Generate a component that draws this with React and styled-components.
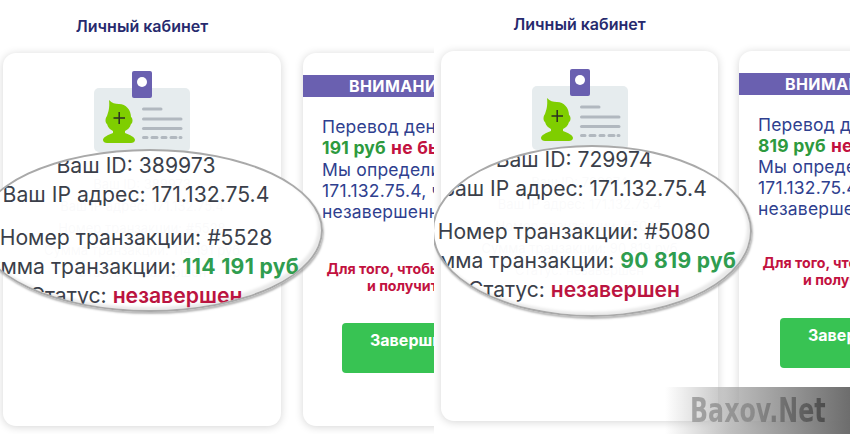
import React from "react";
import styled, { createGlobalStyle } from "styled-components";

const Global = createGlobalStyle`
  html, body { margin: 0; padding: 0; background: #fff; }
  body { font-family: Inter, "Liberation Sans", sans-serif; }
`;

const Page = styled.div`
  position: relative;
  display: flex;
  width: 850px;
  height: 434px;
  overflow: hidden;
  background: #fff;
`;

const Shot = styled.section`
  position: relative;
  flex: none;
  width: ${(p) => p.$width}px;
  height: 434px;
  overflow: hidden;
  background: #fff;
  padding-left: ${(p) => p.$left}px;
  padding-top: ${(p) => p.$top}px;
  box-sizing: border-box;
`;

const Title = styled.h2`
  width: ${(p) => p.$width}px;
  margin: 0 0 ${(p) => p.$gap}px;
  font-size: 16px;
  line-height: 18px;
  font-weight: 600;
  text-align: center;
  color: #272a6e;
`;

const Cards = styled.div`
  display: flex;
  gap: ${(p) => p.$gap}px;
`;

const Card = styled.div`
  flex: none;
  width: ${(p) => p.$width}px;
  height: ${(p) => p.$height}px;
  background: #fff;
  border-radius: 13px;
  box-shadow: 0 1px 9px rgba(0, 0, 0, 0.17);
`;

const IdCard = styled(Card)`
  display: flex;
  flex-direction: column;
  align-items: center;
  padding-top: 18px;
  box-sizing: border-box;
`;

const BadgeIcon = styled.svg`
  display: block;
  flex: none;
  width: 96px;
  height: 84px;
`;

const Ghost = styled.div`
  display: flex;
  flex-direction: column;
  align-items: center;
  gap: 5px;
  margin-top: 21px;
  font-size: 13px;
  line-height: 17px;
  color: #30344d;
`;

const Notice = styled(Card)`
  padding-top: 22px;
  box-sizing: border-box;
  overflow: hidden;
`;

const Banner = styled.div`
  height: 22px;
  padding-left: 46px;
  background: #6a60b0;
  color: #fff;
  font-size: 16px;
  line-height: 22px;
  font-weight: 700;
  letter-spacing: 0.4px;
  white-space: nowrap;
`;

const Message = styled.p`
  margin: 19px 0 0;
  padding-left: 19px;
  font-size: ${(p) => p.$size}px;
  line-height: ${(p) => p.$line}px;
  letter-spacing: 0.2px;
  color: #2f3f8f;
  white-space: nowrap;
`;

const Good = styled.b`
  font-weight: 700;
  color: #2d9a3e;
`;

const Bad = styled.b`
  font-weight: 700;
  color: #c2123f;
`;

const Warning = styled.p`
  margin: ${(p) => p.$gap}px 0 0;
  font-size: 14.2px;
  line-height: 17px;
  font-weight: 700;
  text-align: center;
  color: #c2123f;
  white-space: nowrap;
`;

const CompleteButton = styled.div`
  box-sizing: border-box;
  width: ${(p) => p.$width}px;
  height: 50px;
  margin: ${(p) => p.$gap}px auto 0;
  padding: 8px 0 0 28px;
  border-radius: 4px;
  background: #38c353;
  color: #fff;
  font-size: 16px;
  line-height: 18px;
  font-weight: 700;
  white-space: nowrap;
`;

const Lens = styled.div`
  position: absolute;
  left: ${(p) => p.$x}px;
  top: ${(p) => p.$y}px;
  width: ${(p) => p.$w}px;
  height: ${(p) => p.$h}px;
  box-sizing: border-box;
  border-radius: 50%;
  border: 2px solid #a9a9a9;
  background: rgba(255, 255, 255, 0.975);
  box-shadow: 1px 2px 2px rgba(0, 0, 0, 0.28), inset -3px -3px 3px #e9e9e9;
  overflow: hidden;
`;

const LensLines = styled.div`
  position: absolute;
  left: ${(p) => p.$cx}px;
  top: ${(p) => p.$top}px;
  transform: translateX(-50%);
  display: flex;
  flex-direction: column;
  align-items: center;
  font-size: ${(p) => p.$size}px;
  line-height: 29px;
  color: #3b3f4a;
  white-space: nowrap;
`;

const LensGap = styled.div`
  height: 14px;
`;

const LensSum = styled.span`
  font-weight: 700;
  letter-spacing: 0.3px;
  color: #2f9d4f;
`;

const LensStatus = styled.span`
  font-weight: 600;
  color: #bb1440;
`;

const Watermark = styled.div`
  position: absolute;
  right: 0;
  bottom: 0;
  width: 185px;
  height: 47px;
  padding-left: 25px;
  box-sizing: border-box;
  background: linear-gradient(90deg, rgba(120, 120, 120, 0) 0%, rgba(170, 170, 170, 0.75) 35%, #6d6d6d 100%);
`;

const WatermarkText = styled.span`
  display: block;
  width: max-content;
  font-family: "DejaVu Sans", "Liberation Sans", sans-serif;
  font-size: 33px;
  line-height: 47px;
  font-weight: 700;
  white-space: nowrap;
  transform: scaleX(0.72);
  transform-origin: left center;
  background: linear-gradient(90deg, #a5a5a5 0%, #8c8c8c 45%, #4c4c4c 100%);
  -webkit-background-clip: text;
  background-clip: text;
  color: transparent;
`;

function Badge() {
  return (
    <BadgeIcon viewBox="0 0 96 84" aria-hidden="true">
      <rect x="0" y="17" width="96" height="64" rx="5" fill="#e6ecee" />
      <rect x="38" y="0" width="20" height="27" rx="2" fill="#6a60b0" />
      <circle cx="48" cy="11" r="5" fill="#fff" />
      <path
        d="M15 29 C18 32 21 33 25 33 C32 33 37 39 37 46 C39 47 39 52 37 53 C36 57 33 59 31 60 L31 62 C36 64 41 66 41 69 C41 71 39 72 37 72 L13 72 C11 72 9 71 9 69 C9 66 14 64 19 62 L19 60 C17 59 14 57 13 53 C11 52 11 47 13 45 C14 42 16 37 15 29 Z"
        fill="#7fce00"
      />
      <path d="M19.500 47 H31 M25.200 41 V53" stroke="#2b2f22" strokeWidth="1.500" fill="none" />
      <g stroke="#b1b8bf" strokeWidth="3" strokeLinecap="round" fill="none">
        <path d="M49.500 38 H67" />
        <path d="M49.500 48 H87" />
        <path d="M49.500 57.500 H87" />
        <path d="M49.500 66.500 H53 M58 66.500 H63 M68 66.500 H72 M77 66.500 H82 M86 66.500 H87" />
      </g>
    </BadgeIcon>
  );
}

function Panel({
  width, left, top, titleGap, cardH, idW, cardGap, id, txn, sum, head, ip,
  lens, lineGap,
}) {
  return (
    <Shot $width={width} $left={left} $top={top}>
      <Title $width={idW} $gap={titleGap}>Личный кабинет</Title>
      <Cards $gap={cardGap}>
        <IdCard $width={idW} $height={cardH}>
          <Badge />
          <Ghost>
            <span>Ваш ID: {id}</span>
            <span>Ваш IP адрес: {ip}</span>
            <span>Номер транзакции: #{txn}</span>
            <span>Сумма транзакции: {sum} руб</span>
            <span>Статус: незавершен</span>
          </Ghost>
        </IdCard>
        <Notice $width={278} $height={cardH}>
          <Banner>ВНИМАНИЕ!</Banner>
          <Message $size={lineGap.size} $line={lineGap.line}>
            Перевод денежных средств на сумму {head}
            <br />
            <Good>{sum.split(" ")[1]} руб</Good> <Bad>не был завершен.</Bad>
            <br />
            Мы определили, что с IP адреса
            <br />
            {ip}, что перевод
            <br />
            незавершенный.
          </Message>
          <Warning $gap={lineGap.warn}>
            Для того, чтобы вернуть деньги
            <br />
            и получить средства
          </Warning>
          <CompleteButton $gap={lineGap.button} $width={lineGap.buttonW}>Завершить перевод</CompleteButton>
        </Notice>
      </Cards>
      <Lens $x={lens.x} $y={lens.y} $w={lens.w} $h={lens.h}>
        <LensLines $cx={lens.cx} $top={lens.top} $size={lens.size}>
          <span>Ваш ID: {id}</span>
          <span>Ваш IP адрес: {ip}</span>
          <LensGap />
          <span>Номер транзакции: #{txn}</span>
          <span>Сумма транзакции: <LensSum>{sum} руб</LensSum></span>
          <span>Статус: <LensStatus>незавершен</LensStatus></span>
        </LensLines>
      </Lens>
    </Shot>
  );
}

export default function App() {
  return (
    <Page>
      <Global />
      <Panel
        width={434}
        left={3}
        top={17}
        titleGap={18}
        cardH={373}
        idW={278}
        cardGap={22}
        id="389973"
        ip="171.132.75.4"
        txn="5528"
        sum="114 191"
        head="114"
        lens={{ x: -23, y: 149, w: 346, h: 163, cx: 157, top: 0, size: 21.2 }}
        lineGap={{ size: 17.500, line: 21.300, warn: 38, button: 29, buttonW: 200 }}
      />
      <Panel
        width={416}
        left={7}
        top={15}
        titleGap={18}
        cardH={370}
        idW={277}
        cardGap={21}
        id="729974"
        ip="171.132.75.4"
        txn="5080"
        sum="90 819"
        head="90"
        lens={{ x: -2, y: 145, w: 320, h: 172, cx: 140, top: -2, size: 21.1 }}
        lineGap={{ size: 17.500, line: 21, warn: 35, button: 30, buttonW: 196 }}
      />
      <Watermark>
        <WatermarkText>Baxov.Net</WatermarkText>
      </Watermark>
    </Page>
  );
}
